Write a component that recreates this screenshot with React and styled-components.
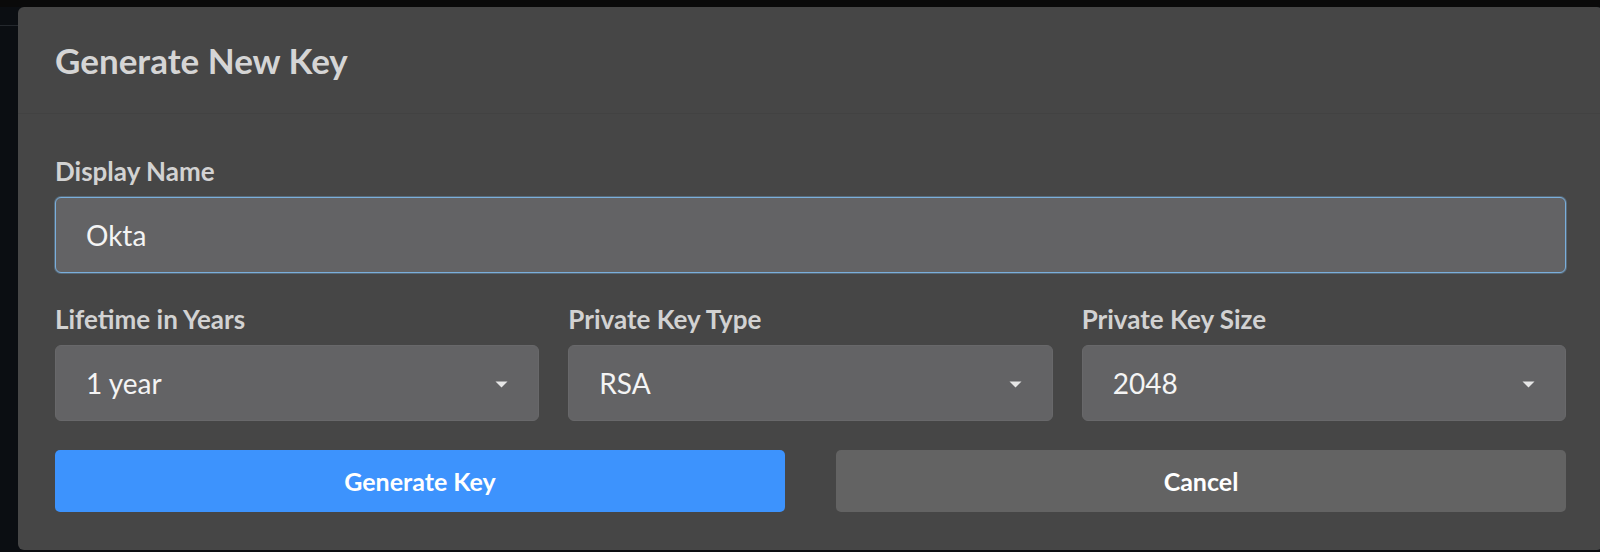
import React from 'react';
import styled, { createGlobalStyle } from 'styled-components';

const GlobalStyle = createGlobalStyle`
  html, body {
    margin: 0;
    padding: 0;
    height: 100%;
    overflow: hidden;
  }
  body {
    font-family: Lato, "Noto Sans", "Liberation Sans", sans-serif;
    background:
      linear-gradient(to bottom, transparent 25px, #24282d 25px, #24282d 26px, transparent 26px),
      #0b0e12;
  }
`;

const Page = styled.div`
  width: 1600px;
  height: 552px;
  padding: 7px 0 0 18px;
  box-sizing: border-box;
  overflow: hidden;
  background: linear-gradient(to bottom, #0a0a0a 7px, transparent 7px);
`;

const Modal = styled.div`
  width: 1585px;
  background: #464646;
  border-radius: 6px;
  box-sizing: border-box;
`;

const Header = styled.div`
  height: 107px;
  box-sizing: border-box;
  display: flex;
  align-items: center;
  padding: 0 37px;
  border-bottom: 1px solid #424242;
`;

const Title = styled.h2`
  margin: 0;
  font-size: 35px;
  font-weight: 700;
  color: #d5d5d5;
`;

const Body = styled.div`
  padding: 43px 37px 38px;
  display: flex;
  flex-direction: column;
  gap: 32px;
`;

const Field = styled.div`
  display: flex;
  flex-direction: column;
  gap: 12px;
  min-width: 0;
`;

const Label = styled.label`
  font-size: 26px;
  line-height: 28px;
  font-weight: 700;
  color: #d2d2d2;
`;

const TextInput = styled.div`
  height: 76px;
  box-sizing: border-box;
  display: flex;
  align-items: center;
  padding: 0 30px;
  background: #636365;
  border: 1px solid #7aaedb;
  box-shadow: 0 0 0 1px rgba(122, 174, 219, 0.35);
  border-radius: 6px;
  font-size: 28px;
  color: #f4f4f4;
`;

const Row = styled.div`
  display: grid;
  grid-template-columns: repeat(3, 1fr);
  column-gap: 29px;
`;

const Select = styled.div`
  height: 76px;
  box-sizing: border-box;
  display: flex;
  align-items: center;
  justify-content: space-between;
  padding: 0 30px;
  background: #636365;
  border: 1px solid #68686a;
  border-radius: 6px;
  font-size: 28px;
  color: #f4f4f4;
`;

const Caret = styled.svg`
  width: 13px;
  height: 7px;
  margin-top: 2px;
  fill: #e6e6e6;
`;

const Actions = styled.div`
  display: grid;
  grid-template-columns: 1fr 1fr;
  column-gap: 51px;
  margin-top: -3px;
`;

const Button = styled.button`
  height: 62px;
  border: none;
  border-radius: 5px;
  font-family: inherit;
  font-size: 25px;
  font-weight: 700;
  color: #ffffff;
  background: ${p => (p.$primary ? '#3d93fd' : '#636363')};
  cursor: pointer;
`;

const SelectField = ({ label, value }) => (
  <Field>
    <Label>{label}</Label>
    <Select>
      <span>{value}</span>
      <Caret viewBox="0 0 13 7">
        <path d="M0.5 0.5 H12.5 L6.5 6.5 Z" />
      </Caret>
    </Select>
  </Field>
);

const App = () => (
  <>
    <GlobalStyle />
    <Page>
      <Modal>
        <Header>
          <Title>Generate New Key</Title>
        </Header>
        <Body>
          <Field>
            <Label>Display Name</Label>
            <TextInput>Okta</TextInput>
          </Field>
          <Row>
            <SelectField label="Lifetime in Years" value="1 year" />
            <SelectField label="Private Key Type" value="RSA" />
            <SelectField label="Private Key Size" value="2048" />
          </Row>
          <Actions>
            <Button $primary>Generate Key</Button>
            <Button>Cancel</Button>
          </Actions>
        </Body>
      </Modal>
    </Page>
  </>
);

export default App;
